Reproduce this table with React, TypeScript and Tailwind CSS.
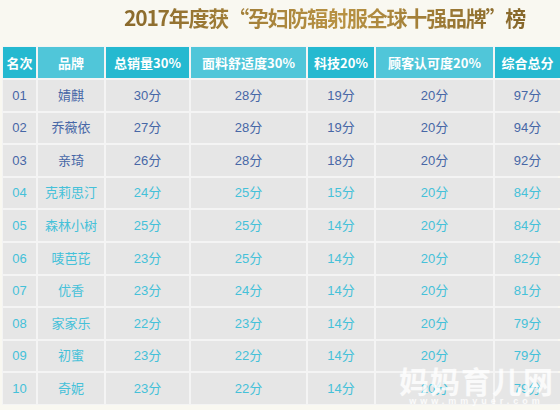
import React from "react";

const rows = [
  ["01", "婧麒", "30分", "28分", "19分", "20分", "97分"],
  ["02", "乔薇依", "27分", "28分", "19分", "20分", "94分"],
  ["03", "亲琦", "26分", "28分", "18分", "20分", "92分"],
  ["04", "克莉思汀", "24分", "25分", "15分", "20分", "84分"],
  ["05", "森林小树", "25分", "25分", "14分", "20分", "84分"],
  ["06", "唛芭芘", "23分", "25分", "14分", "20分", "82分"],
  ["07", "优香", "23分", "24分", "14分", "20分", "81分"],
  ["08", "家家乐", "22分", "23分", "14分", "20分", "79分"],
  ["09", "初蜜", "23分", "22分", "14分", "20分", "79分"],
  ["10", "奇妮", "23分", "22分", "14分", "20分", "79分"],
];

const heads = ["名次", "品牌", "总销量30%", "面料舒适度30%", "科技20%", "顾客认可度20%", "综合总分"];

export default function App() {
  return (
    <div
      className="relative w-[560px] h-[410px] overflow-hidden bg-[#f9f8f1]"
      style={{ fontFamily: '"Liberation Sans", "Noto Sans CJK SC", sans-serif' }}
    >
      <div className="h-[46px] pl-[124px] pt-[3px]">
        <h1
          className="whitespace-nowrap text-[21px] leading-[28px] font-bold tracking-[-1.2px] bg-gradient-to-r from-[#8a6a2c] via-[#b89243] to-[#7d5f26] bg-clip-text text-transparent"
          style={{ fontFamily: '"Noto Sans CJK SC", sans-serif' }}
        >
          2017年度获“孕妇防辐射服全球十强品牌”榜
        </h1>
      </div>

      <div className="mx-[2px] bg-[#f4f4f4] p-[1px] grid grid-cols-[33px_66px_83px_115px_66px_117px_65px] gap-[2px]">
        {heads.map((h, i) => (
          <div
            key={h}
            className={`h-[31px] flex items-center justify-center text-white text-[13px] font-bold ${
              i % 2 === 0 ? "bg-[#25b9d0]" : "bg-[#50c6d9]"
            }`}
            style={{ fontFamily: '"Noto Sans CJK SC", sans-serif' }}
          >
            {h}
          </div>
        ))}
        {rows.map((r, ri) =>
          r.map((c, ci) => (
            <div
              key={ri + "-" + ci}
              className={`h-[30.6px] flex items-center justify-center bg-[#e6e6e6] text-[13px] ${
                ri < 3 ? "text-[#4767a6]" : "text-[#45c1d9]"
              }`}
            >
              {c}
            </div>
          ))
        )}
      </div>

      <div className="absolute right-[6px] bottom-[4px] flex flex-col items-center text-white/80 pointer-events-none">
        <span
          className="text-[30px] leading-[32px] font-bold tracking-[1px]"
          style={{ fontFamily: '"Noto Sans CJK SC", sans-serif' }}
        >
          妈妈育儿网
        </span>
        <span className="text-[9px] leading-[10px] tracking-[4px] font-bold">www.mmyuer.com</span>
      </div>
    </div>
  );
}
